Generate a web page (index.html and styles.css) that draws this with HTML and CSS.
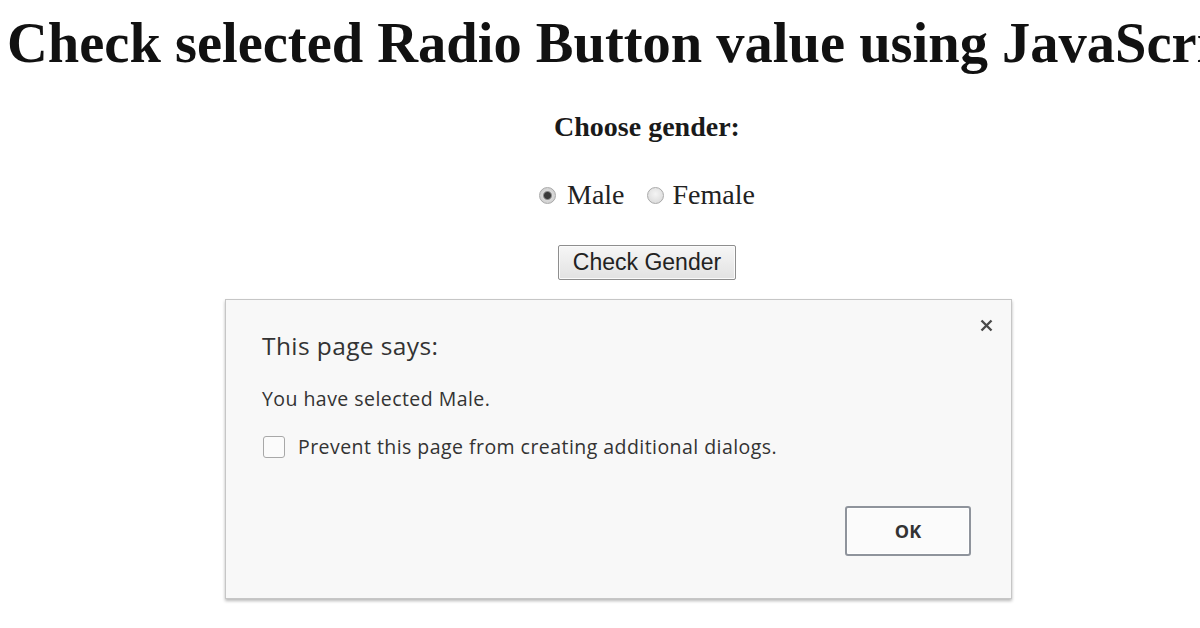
FILE: index.html
```html
<!DOCTYPE html>
<html lang="en">
<head>
<meta charset="utf-8">
<title>Check selected Radio Button value using JavaScript</title>
<link rel="stylesheet" href="styles.css">
</head>
<body>
  <h1 class="title">Check selected Radio Button value using JavaScript</h1>
  <div class="form">
    <p class="prompt">Choose gender:</p>
    <div class="radios">
      <input class="radio" type="radio" name="gender" id="male" checked>
      <label class="radio-label male-label" for="male">Male</label>
      <input class="radio" type="radio" name="gender" id="female">
      <label class="radio-label" for="female">Female</label>
    </div>
    <button class="check-btn" type="button">Check Gender</button>
  </div>
  <div class="dialog">
    <span class="close" aria-label="Close">
      <svg width="13" height="13" viewBox="0 0 13 13"><path d="M1.5 1.5 L11.5 11.5 M11.5 1.5 L1.5 11.5" stroke="#4a4a4a" stroke-width="2.4" stroke-linecap="butt" fill="none"/></svg>
    </span>
    <div class="dialog-title">This page says:</div>
    <div class="dialog-msg">You have selected Male.</div>
    <label class="prevent">
      <span class="box"></span>
      <span class="prevent-text">Prevent this page from creating additional dialogs.</span>
    </label>
    <div class="actions">
      <button class="ok-btn" type="button">OK</button>
    </div>
  </div>
</body>
</html>
```

FILE: styles.css
```css
html, body {
  margin: 0;
  padding: 0;
  background: #ffffff;
  overflow: hidden;
}

body {
  width: 1200px;
  height: 628px;
  font-family: "Liberation Serif", "Times New Roman", serif;
  color: #111;
}

.title {
  margin: 11px 0 0;
  padding-left: 7px;
  font-family: "Liberation Serif", "Times New Roman", serif;
  font-weight: bold;
  font-size: 56.5px;
  line-height: 64px;
  white-space: nowrap;
  color: #111;
}

.form {
  padding-left: 94px;
  text-align: center;
}

.prompt {
  margin: 36px 0 0;
  font-weight: bold;
  font-size: 28px;
  line-height: 32px;
  color: #1a1a1a;
}

.radios {
  margin-top: 36px;
  height: 32px;
  display: flex;
  justify-content: center;
  align-items: center;
  font-size: 28px;
  line-height: 32px;
  color: #222;
}

.radio {
  appearance: none;
  -webkit-appearance: none;
  margin: 0;
  width: 17px;
  height: 17px;
  border-radius: 50%;
  border: 1px solid #a9a9a9;
  box-sizing: border-box;
  background: radial-gradient(circle at 50% 40%, #f4f4f4 0%, #d6d6d6 100%);
}

.radio:checked {
  background: radial-gradient(circle, #3a3a3a 0 3px, #8a8a8a 4px, #d9d9d9 5px, #c9c9c9 100%);
}

.radio-label {
  margin-left: 9px;
}

.male-label {
  margin-left: 11px;
  margin-right: 22px;
}

.check-btn {
  margin-top: 34px;
  height: 35px;
  padding: 0 14px;
  font-family: "Liberation Sans", Arial, sans-serif;
  font-size: 23px;
  line-height: 33px;
  color: #222;
  border: 1px solid #8e8e8e;
  border-radius: 2px;
  background: linear-gradient(#f6f6f6, #e2e2e2);
  box-shadow: inset 0 0 0 1px #fbfbfb;
}

.dialog {
  position: relative;
  box-sizing: border-box;
  margin: 19px 0 0 225px;
  width: 787px;
  height: 300px;
  padding: 30px 40px 42px 36px;
  background: #f8f8f8;
  border: 1px solid #c6c6c6;
  box-shadow: 0 2px 3px rgba(0, 0, 0, 0.28);
  display: flex;
  flex-direction: column;
  font-family: "Open Sans", "Noto Sans", sans-serif;
  color: #333;
}

.close {
  position: absolute;
  top: 19px;
  right: 18px;
  width: 13px;
  height: 13px;
  display: block;
}

.close svg {
  display: block;
}

.dialog-title {
  font-size: 24.5px;
  line-height: 32px;
  letter-spacing: 0.4px;
  color: #333;
}

.dialog-msg {
  margin-top: 24px;
  font-size: 19.5px;
  line-height: 26px;
  color: #333;
  letter-spacing: 0.45px;
}

.prevent {
  margin-top: 24px;
  display: flex;
  align-items: center;
  height: 22px;
}

.box {
  width: 22px;
  height: 22px;
  box-sizing: border-box;
  border: 1.5px solid #a8a8a8;
  border-radius: 3px;
  background: #fbfbfb;
  margin-left: 1px;
}

.prevent-text {
  margin-left: 13px;
  font-size: 19.5px;
  line-height: 22px;
  color: #333;
  letter-spacing: 0.45px;
}

.actions {
  margin-top: auto;
  display: flex;
  justify-content: flex-end;
}

.ok-btn {
  width: 126px;
  height: 50px;
  box-sizing: border-box;
  border: 2px solid #8f949c;
  border-radius: 3px;
  background: #fbfbfb;
  box-shadow: inset 0 0 0 1px #ffffff;
  font-family: "Open Sans", "Noto Sans", sans-serif;
  font-weight: bold;
  font-size: 18px;
  color: #333;
  padding: 0;
}
```
